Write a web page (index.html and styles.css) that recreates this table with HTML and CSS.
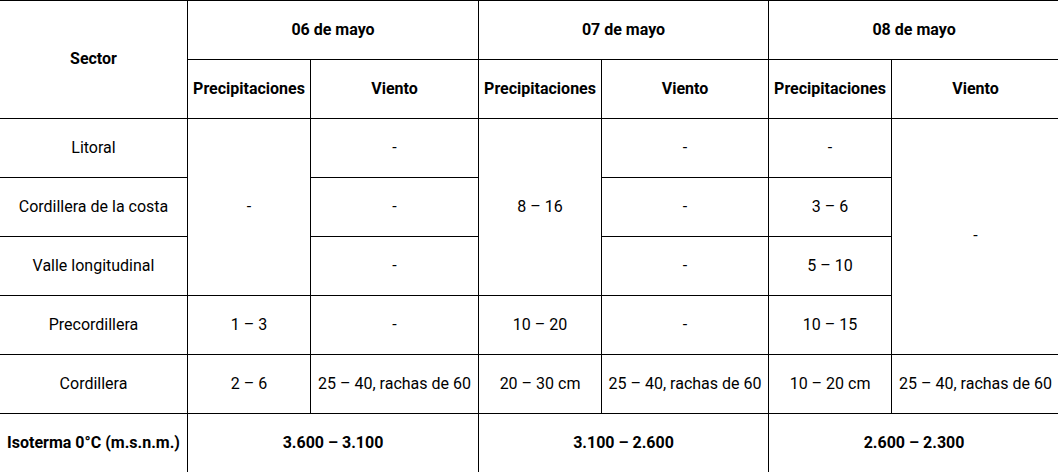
FILE: index.html
```html
<!DOCTYPE html>
<html lang="es">
<head>
<meta charset="utf-8">
<title>Pronóstico</title>
<link rel="stylesheet" href="styles.css">
</head>
<body>
<table class="forecast">
  <colgroup>
    <col class="c-sector">
    <col class="c-pre1">
    <col class="c-vie1">
    <col class="c-pre2">
    <col class="c-vie2">
    <col class="c-pre3">
    <col class="c-vie3">
  </colgroup>
  <thead>
    <tr>
      <th rowspan="2">Sector</th>
      <th colspan="2">06 de mayo</th>
      <th colspan="2">07 de mayo</th>
      <th colspan="2">08 de mayo</th>
    </tr>
    <tr>
      <th>Precipitaciones</th>
      <th>Viento</th>
      <th>Precipitaciones</th>
      <th>Viento</th>
      <th>Precipitaciones</th>
      <th>Viento</th>
    </tr>
  </thead>
  <tbody>
    <tr>
      <td>Litoral</td>
      <td rowspan="3">-</td>
      <td>-</td>
      <td rowspan="3">8 – 16</td>
      <td>-</td>
      <td>-</td>
      <td rowspan="4">-</td>
    </tr>
    <tr>
      <td>Cordillera de la costa</td>
      <td>-</td>
      <td>-</td>
      <td>3 – 6</td>
    </tr>
    <tr>
      <td>Valle longitudinal</td>
      <td>-</td>
      <td>-</td>
      <td>5 – 10</td>
    </tr>
    <tr>
      <td>Precordillera</td>
      <td>1 – 3</td>
      <td>-</td>
      <td>10 – 20</td>
      <td>-</td>
      <td>10 – 15</td>
    </tr>
    <tr>
      <td>Cordillera</td>
      <td>2 – 6</td>
      <td>25 – 40, rachas de 60</td>
      <td>20 – 30 cm</td>
      <td>25 – 40, rachas de 60</td>
      <td>10 – 20 cm</td>
      <td>25 – 40, rachas de 60</td>
    </tr>
    <tr class="iso">
      <th>Isoterma 0°C (m.s.n.m.)</th>
      <th colspan="2">3.600 – 3.100</th>
      <th colspan="2">3.100 – 2.600</th>
      <th colspan="2">2.600 – 2.300</th>
    </tr>
  </tbody>
</table>
</body>
</html>
```

FILE: styles.css
```css
html, body {
  margin: 0;
  padding: 0;
  background: #ffffff;
}

body {
  overflow: hidden;
  font-family: Roboto, "Liberation Sans", Arial, sans-serif;
  font-size: 16px;
  color: #000000;
}

.forecast {
  border-collapse: collapse;
  table-layout: fixed;
  width: 1060px;
  margin-left: -1px;
}

.c-sector { width: 188px; }
.c-pre1 { width: 123px; }
.c-vie1 { width: 168px; }
.c-pre2 { width: 123px; }
.c-vie2 { width: 167px; }
.c-pre3 { width: 123px; }
.c-vie3 { width: 168px; }

.forecast th,
.forecast td {
  border: 1px solid #000000;
  height: 56px;
  padding: 0 0 2px 0;
  text-align: center;
  vertical-align: middle;
  white-space: nowrap;
}

.forecast th {
  font-weight: 700;
}

.forecast td {
  font-weight: 400;
}
```
